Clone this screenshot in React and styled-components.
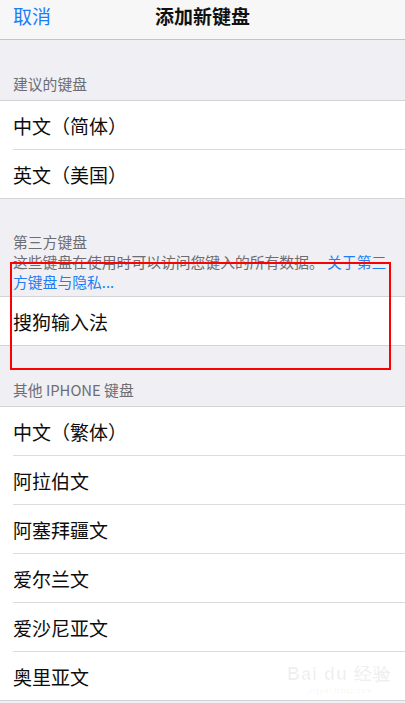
import React from "react";
import styled, { createGlobalStyle } from "styled-components";

const Global = createGlobalStyle`
  html, body { margin: 0; padding: 0; background: #efeff4; }
  body { font-family: "Noto Sans CJK SC", "Noto Sans", sans-serif; }
  #root { width: 405px; height: 703px; overflow: hidden; }
`;

const Screen = styled.div`
  position: relative;
  width: 405px;
  height: 703px;
  overflow: hidden;
  background: #efeff4;
`;

const NavBar = styled.div`
  height: 40px;
  background: #f7f7f8;
  border-bottom: 1px solid #c4c4c8;
  display: grid;
  grid-template-columns: 1fr auto 1fr;
  align-items: start;
  padding: 4px 13px 0;
  box-sizing: border-box;
`;

const NavButton = styled.span`
  font-size: 19px;
  line-height: 23px;
  color: #1a7ef8;
  justify-self: start;
`;

const NavTitle = styled.span`
  font-size: 19px;
  line-height: 23px;
  font-weight: 600;
  color: #111;
`;

const SectionHeader = styled.div`
  padding: ${(p) => p.$top}px 13px ${(p) => p.$bottom}px;
  font-size: 14.8px;
  line-height: 20px;
  color: #6d6d72;
  white-space: nowrap;
`;

const Link = styled.span`
  color: #1f7ef2;
`;

const Group = styled.div`
  background: #fff;
  border-top: 1px solid #d3d3d6;
  border-bottom: 1px solid #d3d3d6;
`;

const Row = styled.div`
  height: 48px;
  display: flex;
  align-items: center;
  padding-left: 13px;
  font-size: 19px;
  color: #0d0d0d;
  & + & {
    border-top: 1px solid #dcdcdf;
    margin-left: 13px;
    padding-left: 0;
  }
`;

const Annotation = styled.div`
  position: absolute;
  left: 10px;
  top: 262px;
  width: 381px;
  height: 108px;
  border: 2px solid #ff0000;
  box-sizing: border-box;
  pointer-events: none;
`;

const Watermark = styled.div`
  position: absolute;
  left: 287px;
  top: 662px;
  display: flex;
  flex-direction: column;
  align-items: center;
  color: rgba(0, 0, 0, 0.06);
  font-family: "Liberation Sans", sans-serif;
  pointer-events: none;
`;

const WatermarkMain = styled.span`
  font-size: 18px;
  font-weight: 700;
  letter-spacing: 1px;
`;

const WatermarkSub = styled.span`
  font-size: 8px;
`;

const suggested = ["中文（简体）", "英文（美国）"];
const others = ["中文（繁体）", "阿拉伯文", "阿塞拜疆文", "爱尔兰文", "爱沙尼亚文", "奥里亚文"];

export default function App() {
  return (
    <Screen>
      <Global />
      <NavBar>
        <NavButton>取消</NavButton>
        <NavTitle>添加新键盘</NavTitle>
        <span />
      </NavBar>

      <SectionHeader $top={34} $bottom={6}>建议的键盘</SectionHeader>
      <Group>
        {suggested.map((t) => (
          <Row key={t}>{t}</Row>
        ))}
      </Group>

      <SectionHeader $top={33} $bottom={4}>
        第三方键盘
        <br />
        这些键盘在使用时可以访问您键入的所有数据。 <Link>关于第三</Link>
        <br />
        <Link>方键盘与隐私...</Link>
      </SectionHeader>
      <Group>
        <Row>搜狗输入法</Row>
      </Group>

      <SectionHeader $top={34} $bottom={6}>其他 IPHONE 键盘</SectionHeader>
      <Group>
        {others.map((t) => (
          <Row key={t}>{t}</Row>
        ))}
      </Group>

      <Annotation />
      <Watermark>
        <WatermarkMain>Bai du 经验</WatermarkMain>
        <WatermarkSub>jingyan.baidu.com</WatermarkSub>
      </Watermark>
    </Screen>
  );
}
